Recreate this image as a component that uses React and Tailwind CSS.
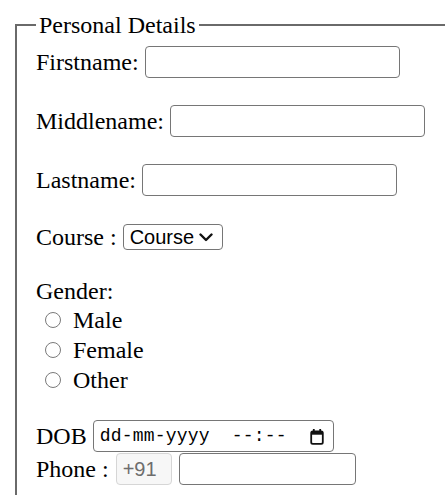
import React from 'react';

const serif = { fontFamily: '"Liberation Serif", "Times New Roman", serif' };

function TextBox({ className = '' }) {
  return (
    <span className={`block h-[32px] shrink-0 rounded-[4px] border border-[#767676] bg-white ${className}`} />
  );
}

function Radio({ label }) {
  return (
    <div className="flex h-[30px] items-center">
      <span className="ml-[9px] h-[16px] w-[16px] shrink-0 rounded-full border-[1.5px] border-[#7a7a7a] bg-white" />
      <span className="ml-[12px] leading-[30px]">{label}</span>
    </div>
  );
}

function CalendarIcon() {
  return (
    <svg width="14" height="17" viewBox="0 0 14 17" fill="none">
      <rect x="1.2" y="3.5" width="11.6" height="12.3" rx="1.6" stroke="#111" strokeWidth="1.8" />
      <rect x="1.2" y="3.5" width="11.6" height="3.2" fill="#111" />
      <path d="M3.8 1v3.5M10.2 1v3.5" stroke="#111" strokeWidth="1.8" />
    </svg>
  );
}

export default function App() {
  return (
    <div className="h-[495px] w-[445px] overflow-hidden bg-white text-[24px] text-black" style={serif}>
      <div className="pl-[15px] pt-[11px]">
        <fieldset className="w-[470px] border-2 border-[#6a6a6a] pl-[19px] pb-[20px] pt-[7px]">
          <legend className="px-[3px] leading-[28px]">Personal Details</legend>

          {/* name rows */}
          <div className="flex h-[32px] items-center gap-[6px]">
            <span>Firstname:</span>
            <TextBox className="w-[255px]" />
          </div>
          <div className="mt-[27px] flex h-[32px] items-center gap-[6px]">
            <span>Middlename:</span>
            <TextBox className="w-[255px]" />
          </div>
          <div className="mt-[27px] flex h-[32px] items-center gap-[6px]">
            <span>Lastname:</span>
            <TextBox className="w-[255px]" />
          </div>

          {/* course */}
          <div className="mt-[25px] flex h-[32px] items-center gap-[6px]">
            <span>Course :</span>
            <span
              className="flex h-[26px] w-[100px] items-center justify-between rounded-[4px] border border-[#767676] bg-white pl-[6px] pr-[9px] text-[20px]"
              style={{ fontFamily: '"Liberation Sans", Arial, sans-serif' }}
            >
              <span className="leading-none">Course</span>
              <svg width="14" height="9" viewBox="0 0 14 9" fill="none">
                <path d="M1.5 1.5l5.5 5.5 5.5-5.5" stroke="#111" strokeWidth="2.4" strokeLinecap="round" strokeLinejoin="round" />
              </svg>
            </span>
          </div>

          {/* gender */}
          <div className="mt-[24px] leading-[28px]">Gender:</div>
          <Radio label="Male" />
          <Radio label="Female" />
          <Radio label="Other" />

          {/* dob */}
          <div className="mt-[25px] flex h-[32px] items-center gap-[6px]">
            <span>DOB</span>
            <span className="flex h-[32px] w-[241px] items-center justify-between rounded-[4px] border border-[#767676] bg-white pl-[6px] pr-[9px]">
              <span
                className="whitespace-pre text-[18px] leading-none tracking-[0.2px]"
                style={{ fontFamily: '"Liberation Mono", "DejaVu Sans Mono", monospace' }}
              >
                dd-mm-yyyy  --:--
              </span>
              <CalendarIcon />
            </span>
          </div>

          {/* phone */}
          <div className="mt-[1px] flex h-[32px] items-center">
            <span>Phone :</span>
            <span
              className="ml-[7px] flex h-[32px] w-[56px] items-center rounded-[4px] border border-[#d6d6d6] bg-[#f7f7f7] pl-[6px] text-[20px] text-[#6d6d6d]"
              style={{ fontFamily: '"Liberation Sans", Arial, sans-serif' }}
            >
              +91
            </span>
            <TextBox className="ml-[7px] w-[177px]" />
          </div>
        </fieldset>
      </div>
    </div>
  );
}
